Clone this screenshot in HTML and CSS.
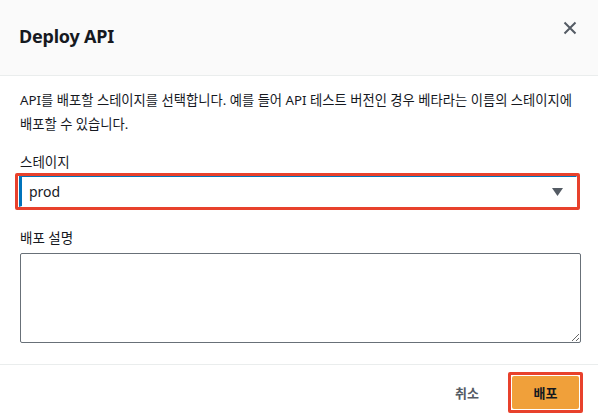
FILE: index.html
```html
<!DOCTYPE html>
<html lang="ko">
<head>
<meta charset="utf-8">
<link rel="stylesheet" href="styles.css">
</head>
<body>
<div class="modal">
  <div class="modal-header">
    <h2 class="title">Deploy API</h2>
    <button class="close" aria-label="닫기">
      <svg width="14" height="14" viewBox="0 0 14 14"><path d="M1.5 1.5 L12.5 12.5 M12.5 1.5 L1.5 12.5" stroke="#545b64" stroke-width="2" fill="none"/></svg>
    </button>
  </div>
  <div class="modal-body">
    <p class="desc">API를 배포할 스테이지를 선택합니다. 예를 들어 API 테스트 버전인 경우 베타라는 이름의 스테이지에 배포할 수 있습니다.</p>
    <div class="field">
      <label class="label">스테이지</label>
      <div class="highlight">
        <div class="select">
          <span>prod</span>
          <svg class="caret" width="11" height="8" viewBox="0 0 11 8"><path d="M0 0 H11 L5.5 8 Z" fill="#545b64"/></svg>
        </div>
      </div>
    </div>
    <div class="field field-desc">
      <label class="label">배포 설명</label>
      <textarea class="textarea"></textarea>
    </div>
  </div>
  <div class="modal-footer">
    <button class="btn-link">취소</button>
    <div class="highlight btn-wrap">
      <button class="btn-primary">배포</button>
    </div>
  </div>
</div>
</body>
</html>
```
FILE: styles.css
```css
* { box-sizing: border-box; }
body {
  margin: 0;
  background: #fff;
  font-family: "Noto Sans", "Noto Sans CJK KR", sans-serif;
  color: #16191f;
}
.modal { width: 598px; height: 419px; display: flex; flex-direction: column; }
.modal-header {
  height: 76px;
  background: #fafafa;
  border-bottom: 1px solid #eaeded;
  display: flex;
  align-items: center;
  justify-content: space-between;
  padding: 0 21px 4px 19px;
}
.title { margin: 0; font-size: 18px; font-weight: 700; letter-spacing: -0.2px; }
.close { background: none; border: 0; padding: 0; display: flex; margin-top: -16px; }
.modal-body { padding: 12px 18px 0 20px; flex: 1; }
.desc { margin: 0; font-size: 13.3px; line-height: 24px; word-break: keep-all; }
.field { margin-top: 16px; }
.label { display: block; font-size: 13.5px; line-height: 20px; margin-bottom: 1px; }
.highlight {
  border: 3px solid #e8412c;
  border-radius: 2px;
  margin-left: -5px;
}
.select {
  height: 31px;
  border-top: 1px solid #0073bb;
  border-left: 3px solid #0073bb;
  border-right: 1px solid #fff;
  border-bottom: 1px solid #fff;
  display: flex;
  align-items: center;
  justify-content: space-between;
  padding: 0 13px 0 7px;
  font-size: 14px;
  margin-left: 1px;
}
.caret { margin-top: 1px; }
.field-desc { margin-top: 18px; }
.field-desc .label { margin-bottom: 5px; }
.textarea {
  display: block;
  width: 561px;
  height: 90px;
  border: 1px solid #687078;
  border-radius: 2px;
  resize: vertical;
  margin: 0;
}
.modal-footer {
  height: 55px;
  border-top: 1px solid #eaeded;
  display: flex;
  align-items: center;
  justify-content: flex-end;
  padding: 0 15px 0 0;
  gap: 29px;
}
.btn-link {
  background: none; border: 0; font-family: inherit; font-size: 13px; font-weight: 700; color: #545b64;
  padding: 0;
}
.btn-wrap { margin-left: 0; padding: 1px; border-radius: 2px; }
.btn-primary {
  display: block;
  width: 67px; height: 33px;
  background: #f0a03a;
  border: 0;
  border-radius: 2px;
  font-family: inherit;
  font-size: 13px; font-weight: 700; color: #16191f;
}
```
